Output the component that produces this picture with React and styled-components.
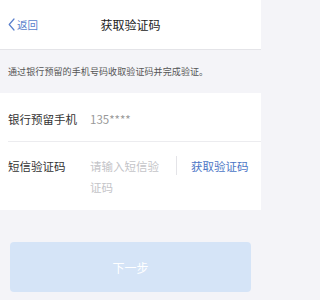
import React from "react";
import styled, { createGlobalStyle } from "styled-components";

const Global = createGlobalStyle`
  html, body { margin: 0; padding: 0; background: #f4f4f8; }
  body { font-family: "Noto Sans CJK SC", "Noto Sans", sans-serif; }
  * { box-sizing: border-box; }
`;

const Page = styled.div`
  width: 261px;
  height: 300px;
  background: #f4f4f8;
  display: flex;
  flex-direction: column;
`;

const Header = styled.div`
  height: 50px;
  background: #fff;
  border-bottom: 1px solid #e4e4e8;
  display: grid;
  grid-template-columns: 1fr auto 1fr;
  align-items: center;
  padding: 0 8px;
`;

const Back = styled.div`
  display: flex;
  align-items: center;
  gap: 2px;
  color: #5a7fcc;
  font-size: 10.5px;
  line-height: 14px;
`;

const Title = styled.div`
  font-size: 12px;
  color: #222;
  line-height: 16px;
`;

const Notice = styled.div`
  height: 43px;
  display: flex;
  align-items: center;
  padding: 0 8px;
  font-size: 9px;
  color: #555;
  letter-spacing: 0.1px;
`;

const Form = styled.div`
  background: #fff;
  padding-left: 8px;
`;

const Row = styled.div`
  display: flex;
  align-items: flex-start;
  padding: ${(p) => p.$pad};
  border-bottom: ${(p) => (p.$last ? "none" : "1px solid #ececef")};
  font-size: 11.5px;
  line-height: 21px;
`;

const Label = styled.div`
  width: 82px;
  color: #333;
  flex-shrink: 0;
`;

const Value = styled.div`
  color: #999;
  flex: 1;
`;

const Placeholder = styled.div`
  width: 76px;
  color: #c4c4c8;
  flex-shrink: 0;
`;

const Sep = styled.div`
  width: 1px;
  height: 19px;
  background: #e4e4e8;
  margin: 0 14px 0 10px;
  flex-shrink: 0;
`;

const Link = styled.div`
  color: #4c76c6;
  white-space: nowrap;
`;

const Footer = styled.div`
  padding: 32px 10px 0;
`;

const Button = styled.div`
  height: 50px;
  border-radius: 4px;
  background: #d5e4f7;
  color: #fff;
  font-size: 12px;
  display: flex;
  align-items: center;
  justify-content: center;
`;

export default function App() {
  return (
    <>
      <Global />
      <Page>
        <Header>
          <Back>
            <svg width="7" height="13" viewBox="0 0 7 13">
              <path d="M6 1 L1.2 6.5 L6 12" fill="none" stroke="#5a7fcc" strokeWidth="1.2" strokeLinecap="round" strokeLinejoin="round" />
            </svg>
            返回
          </Back>
          <Title>获取验证码</Title>
          <div />
        </Header>
        <Notice>通过银行预留的手机号码收取验证码并完成验证。</Notice>
        <Form>
          <Row $pad="16px 0 11px">
            <Label>银行预留手机</Label>
            <Value>135****</Value>
          </Row>
          <Row $pad="14px 0 12px" $last>
            <Label>短信验证码</Label>
            <Placeholder>请输入短信验证码</Placeholder>
            <Sep />
            <Link>获取验证码</Link>
          </Row>
        </Form>
        <Footer>
          <Button>下一步</Button>
        </Footer>
      </Page>
    </>
  );
}
